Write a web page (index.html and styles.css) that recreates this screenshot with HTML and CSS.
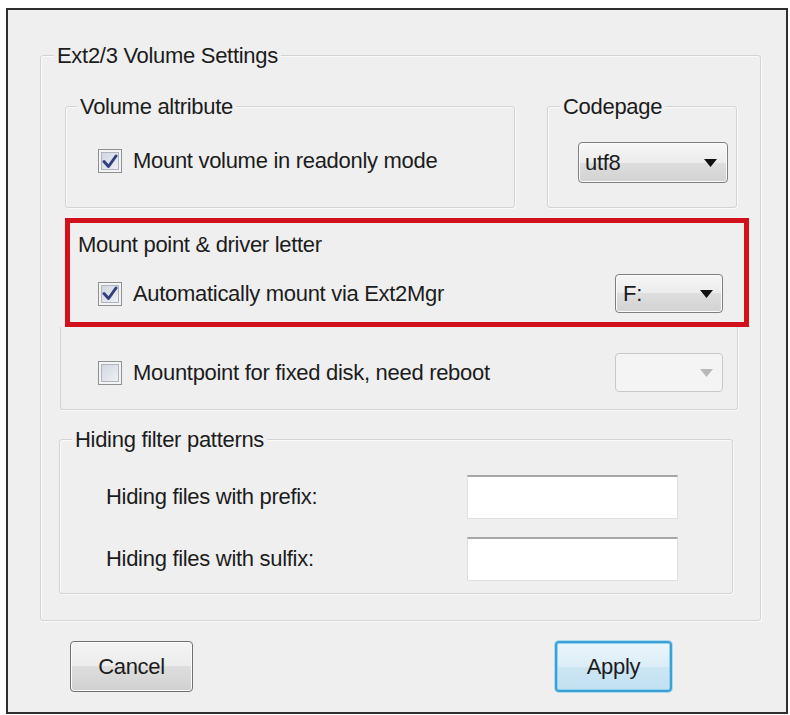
FILE: index.html
```html
<!DOCTYPE html>
<html lang="en">
<head>
<meta charset="utf-8">
<title>Ext2/3 Volume Settings</title>
<link rel="stylesheet" href="styles.css">
</head>
<body>
<div class="window">
  <div class="group outer">
    <div class="group-title outer-title">Ext2/3 Volume Settings</div>

    <div class="top-row">
      <div class="group attr">
        <div class="group-title attr-title">Volume altribute</div>
        <label class="check-row attr-row">
          <span class="checkbox"><svg class="tick" width="16" height="15" viewBox="0 0 16 15"><path d="M2 7.5 L6.5 12.5 L14 2" fill="none" stroke="#33407f" stroke-width="3" stroke-linejoin="round" stroke-linecap="round"/></svg></span>
          <span>Mount volume in readonly mode</span>
        </label>
      </div>
      <div class="group codepage">
        <div class="group-title codepage-title">Codepage</div>
        <div class="combo codepage-combo">
          <span>utf8</span>
          <svg class="arrow" width="13" height="8" viewBox="0 0 13 8"><polygon points="0,0 13,0 6.5,8" fill="#111"/></svg>
        </div>
      </div>
    </div>

    <div class="mount">
      <div class="highlight">
        <div class="plain-title">Mount point &amp; driver letter</div>
        <div class="option-row hl-row">
          <label class="check-row">
            <span class="checkbox"><svg class="tick" width="16" height="15" viewBox="0 0 16 15"><path d="M2 7.5 L6.5 12.5 L14 2" fill="none" stroke="#33407f" stroke-width="3" stroke-linejoin="round" stroke-linecap="round"/></svg></span>
            <span>Automatically mount via Ext2Mgr</span>
          </label>
          <div class="combo drive">
            <span>F:</span>
            <svg class="arrow" width="13" height="8" viewBox="0 0 13 8"><polygon points="0,0 13,0 6.5,8" fill="#111"/></svg>
          </div>
        </div>
      </div>
      <div class="mount-lower">
        <div class="option-row">
          <label class="check-row">
            <span class="checkbox"></span>
            <span>Mountpoint for fixed disk, need reboot</span>
          </label>
          <div class="combo drive disabled">
            <span></span>
            <svg class="arrow" width="13" height="8" viewBox="0 0 13 8"><polygon points="0,0 13,0 6.5,8" fill="#b8b8b8"/></svg>
          </div>
        </div>
      </div>
    </div>

    <div class="group hiding">
      <div class="group-title hiding-title">Hiding filter patterns</div>
      <div class="field-row first">
        <span>Hiding files with prefix:</span>
        <input class="textbox" type="text">
      </div>
      <div class="field-row second">
        <span>Hiding files with sulfix:</span>
        <input class="textbox" type="text">
      </div>
    </div>
  </div>

  <div class="buttons">
    <button class="btn cancel" type="button">Cancel</button>
    <button class="btn apply" type="button">Apply</button>
  </div>
</div>
</body>
</html>
```
FILE: styles.css
```css
* {
  box-sizing: border-box;
}

body {
  margin: 0;
  background: #ffffff;
  font-family: "Liberation Sans", Arial, sans-serif;
  font-size: 22px;
  letter-spacing: -0.3px;
  color: #1c1c1c;
}

.window {
  margin: 8px 0 0 6px;
  width: 782px;
  height: 706px;
  border: 2px solid #2e2e2e;
  background: #efefef;
  display: flex;
  flex-direction: column;
}

.group {
  border: 1px solid #d3d3d3;
  border-radius: 3px;
  box-shadow: inset 1px 1px 0 #fafafa, 1px 1px 0 #fafafa;
}

.group-title,
.plain-title {
  width: fit-content;
  line-height: 24px;
  white-space: nowrap;
}

.group-title {
  margin-top: -12px;
  padding: 0 3px;
  background: #efefef;
}

/* outer group */
.outer {
  margin: 45px 0 0 32px;
  width: 721px;
  display: flex;
  flex-direction: column;
}

.outer-title {
  margin-left: 13px;
}

/* first row */
.top-row {
  display: flex;
  gap: 32px;
  margin: 38px 0 0 24px;
}

.attr {
  width: 450px;
  height: 102px;
}

.attr-title {
  margin-left: 11px;
}

.check-row {
  display: flex;
  align-items: center;
  gap: 11px;
  height: 30px;
  white-space: nowrap;
}

.attr-row {
  margin: 27px 0 0 32px;
}

.checkbox {
  flex: none;
  width: 24px;
  height: 24px;
  border: 1px solid #8e8f8f;
  background: linear-gradient(135deg, #cdd2dc, #f3f4f7);
  box-shadow: inset 0 0 0 2px #f4f4f4, inset 0 0 0 3px #aeb4c0;
  display: flex;
  align-items: center;
  justify-content: center;
}

.codepage {
  width: 190px;
  height: 102px;
}

.codepage-title {
  margin-left: 12px;
}

/* combo boxes */
.combo {
  display: flex;
  align-items: center;
  justify-content: space-between;
  border: 1px solid #7e7e7e;
  border-radius: 4px;
  background: linear-gradient(#f6f6f6, #ececec 50%, #dedede 50%, #d2d2d2);
  box-shadow: inset 0 0 0 1px #fbfbfb;
  padding: 0 10px 0 6px;
}

.codepage-combo {
  margin: 23px 0 0 30px;
  width: 150px;
  height: 41px;
}

.drive {
  width: 108px;
  height: 39px;
  padding: 0 9px 0 7px;
}

.drive.disabled {
  border-color: #c8c8c8;
  background: #f4f4f4;
  box-shadow: none;
}

/* mount point group */
.mount {
  margin: 10px 0 0 19px;
  width: 678px;
}

.highlight {
  border: 5px solid #d2101c;
  margin: 0 -11px 0 5px;
  padding: 10px 21px 9px 8px;
}

.option-row {
  display: flex;
  align-items: center;
  justify-content: space-between;
  height: 39px;
}

.hl-row {
  margin-top: 17px;
  padding-left: 20px;
}

.mount-lower {
  border: 1px solid #d3d3d3;
  border-top: none;
  border-radius: 0 0 3px 3px;
  box-shadow: 1px 1px 0 #fafafa;
  padding: 26px 14px 17px 37px;
}

/* hiding filter group */
.hiding {
  margin: 29px 0 26px 18px;
  width: 674px;
  padding-bottom: 12px;
}

.hiding-title {
  margin-left: 12px;
}

.field-row {
  display: flex;
  align-items: center;
  justify-content: space-between;
  margin: 0 54px 0 46px;
  white-space: nowrap;
}

.field-row.first {
  margin-top: 23px;
}

.field-row.second {
  margin-top: 18px;
}

.textbox {
  width: 211px;
  height: 44px;
  border: 1px solid #e0e0e0;
  border-top: 2px solid #a6a6a6;
  background: #ffffff;
  font: inherit;
}

/* buttons */
.buttons {
  display: flex;
  justify-content: space-between;
  margin: 20px 114px 0 62px;
}

.btn {
  height: 51px;
  font: inherit;
  letter-spacing: inherit;
  color: #1c1c1c;
  border: 1px solid #707070;
  border-radius: 4px;
  background: linear-gradient(#f4f4f4, #ececec 50%, #dedede 50%, #d0d0d0);
  box-shadow: inset 0 0 0 1px #fcfcfc;
  padding: 0;
}

.cancel {
  width: 123px;
}

.apply {
  width: 117px;
  border: 2px solid #3d9fd2;
  background: linear-gradient(#eaf5fb, #dcedf7 50%, #cde6f4 50%, #c2e0f1);
  box-shadow: inset 0 0 0 1px #8fd3f3, 0 0 0 1px #a8dcf2;
}
```
